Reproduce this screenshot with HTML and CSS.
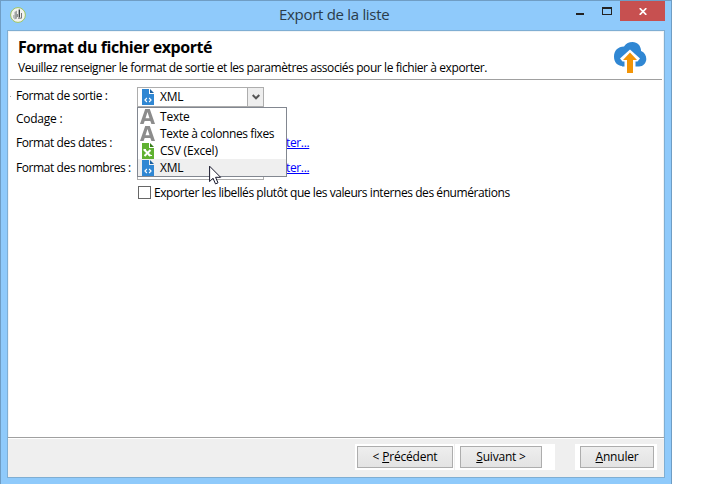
FILE: index.html
```html
<!DOCTYPE html>
<html lang="fr">
<head>
<meta charset="utf-8">
<title>Export de la liste</title>
<link rel="stylesheet" href="styles.css">
</head>
<body>
<svg class="defs" width="0" height="0">
  <symbol id="xml" viewBox="0 0 12 16">
    <path fill="#3087d3" d="M0 0H7V5H12V16H0Z"/>
    <path fill="#1c609f" d="M8 0L12 4H8Z"/>
    <path fill="none" stroke="#fff" stroke-width="1.1" d="M4.9 9L2.9 11L4.9 13M7.1 9L9.1 11L7.1 13"/>
  </symbol>
  <symbol id="csv" viewBox="0 0 12 16">
    <path fill="#5fb130" d="M0 0H7V5H12V16H0Z"/>
    <path fill="#377d18" d="M8 0L12 4H8Z"/>
    <path fill="none" stroke="#fff" stroke-width="2" d="M2 6.5L8.5 13M8.5 7L2.5 13"/>
    <path fill="none" stroke="#fff" d="M1.5 6.5H4M6.5 12.5H10"/>
  </symbol>
  <symbol id="font" viewBox="0 0 15 15">
    <path fill="#8c8c8c" fill-rule="evenodd" d="M5.2 0H9.8L15 15H11.4L10.3 11.9H4.7L3.6 15H0ZM7.5 3L5.5 9.3H9.5Z"/>
  </symbol>
</svg>
<div class="window">
  <header class="titlebar">
    <svg class="app" width="16" height="16" viewBox="0 0 16 16">
      <circle cx="8" cy="8" r="7.4" fill="#f3f3ef" stroke="#9dc45f"/>
      <path fill="#a0a4a4" d="M4.5 5L7 3.5V11.5L4.5 12.5Z"/>
      <path fill="#b9bcbc" d="M3 8H5V12.3L3 11Z"/>
      <path fill="none" stroke="#343a3c" stroke-width="1.3" d="M9.3 2.5V10.5"/>
      <path fill="none" stroke="#777" d="M7.3 7V10M8 11.2H11.5V6"/>
    </svg>
    <h1 class="title">Export de la liste</h1>
    <div class="controls">
      <span class="min"></span><span class="max"></span>
      <span class="close"><svg width="8" height="7" viewBox="0 0 8 7"><path d="M.7 .2L7.3 6.8M7.3 .2L.7 6.8" stroke="#fff" stroke-width="1.7"/></svg></span>
    </div>
  </header>
  <main class="client">
    <section class="head">
      <div class="heading">
        <h2>Format du fichier exporté</h2>
        <p>Veuillez renseigner le format de sortie et les paramètres associés pour le fichier à exporter.</p>
      </div>
      <svg class="cloud" width="33" height="32" viewBox="0 0 33 32">
        <path fill="#3087d3" d="M8 24C3 23.5 0 20 0 14.5C0 8.5 4 4.5 10 4.4C12 1.5 15 0 18.5 0C23.5 0 27 3.8 27.1 9C30.5 10.3 32.3 13.5 32.3 17C32.3 21 29 24.5 25 24.5H8Z"/>
        <path fill="#fff" d="M16 7.6L26 16.5L23.5 19.5H21.5V25H10.5V19.5H8.5L6 16.5Z"/>
        <path fill="#f39507" d="M16 10.5L23 18H19V31H13V18H9Z"/>
      </svg>
    </section>
    <section class="form">
      <div class="row r1"><label>Format de sortie :</label>
        <div class="combo"><svg class="doc"><use href="#xml"/></svg><span class="value">XML</span>
          <span class="drop"><svg width="8" height="6" viewBox="0 0 8 6"><path d="M.7 1L4 4.3L7.3 1" fill="none" stroke="#555" stroke-width="2"/></svg></span>
          <ul class="menu">
            <li><svg class="letter"><use href="#font"/></svg>Texte</li>
            <li><svg class="letter"><use href="#font"/></svg><span class="fixed">Texte à colonnes fixes</span></li>
            <li><svg class="doc"><use href="#csv"/></svg><span class="csv">CSV (Excel)</span></li>
            <li class="on"><svg class="doc"><use href="#xml"/></svg>XML</li>
          </ul>
        </div>
      </div>
      <div class="row r2"><label>Codage :</label></div>
      <div class="row r3"><label>Format des dates :</label><div class="combo"></div><a>ter...</a></div>
      <div class="row r4"><label>Format des nombres :</label><div class="combo"></div><a>ter...</a></div>
      <div class="row r5"><span class="check"></span><span class="checktext">Exporter les libellés plutôt que les valeurs internes des énumérations</span></div>
    </section>
    <footer>
      <span class="pad p1"><button>&lt; <u>P</u>récédent</button></span>
      <span class="pad p2"><button><u>S</u>uivant &gt;</button></span>
      <span class="pad p3"><button><u>A</u>nnuler</button></span>
    </footer>
  </main>
  <svg class="cursor" width="13" height="20" viewBox="0 0 13 20"><path d="M.6 1.2V16.6L4 13.2L6.5 18.9L9 17.8L6.6 12.3H11.6Z" fill="#fff" stroke="#17172b"/></svg>
</div>
</body>
</html>
```
FILE: styles.css
```css
* { box-sizing: border-box; }
body { margin: 0; background: #fff; color: #000; font: 12px/16px "Open Sans", "Noto Sans", sans-serif; letter-spacing: -.2px; }
h1, h2, p, ul { margin: 0; padding: 0; }
svg { display: block; flex: none; }
.defs { position: absolute; }
.window { position: relative; width: 672px; height: 484px; background: #8fcafb; border: 1px solid #6f9dc4; border-bottom: 0; padding: 0 6px 6px; display: flex; flex-direction: column; }
.titlebar { height: 29px; flex: none; display: flex; position: relative; }
.app { margin: 6px 0 0 3px; }
.title { font-size: 15px; line-height: 20px; font-weight: 400; color: #2a3c4a; margin: 3px 0 0 253px; white-space: nowrap; letter-spacing: -.3px; }
.controls { margin-left: auto; display: flex; align-items: flex-start; }
.min { width: 8px; height: 2px; background: #222; margin: 12px 18px 0 0; }
.max { width: 10px; height: 8px; border: 1px solid #222; border-top-width: 2px; margin: 6px 8px 0 0; }
.close { width: 45px; height: 20px; background: #c75050; display: flex; align-items: center; justify-content: center; }
.client { flex: 1; width: 658px; border: 1px solid #7faed3; background: #fff; display: flex; flex-direction: column; box-shadow: inset 1px 1px #f0f4f7, inset -1px 0 #eef2f5; }
.head { height: 49px; margin: 0 2px; border-bottom: 1px solid #a0a0a0; display: flex; }
.heading { flex: 1; padding: 6px 0 0 8px; white-space: nowrap; }
h2 { font-size: 16px; line-height: 20px; letter-spacing: -.45px; }
.heading p { margin-top: 3px; letter-spacing: -.415px; }
.cloud { margin: 11px 15px 0 0; }
.form { flex: 1; padding: 7px 0 0 8px; }
.row { display: flex; height: 21px; align-items: flex-start; white-space: nowrap; }
.r1 { position: relative; }
.r1::before { content: ""; position: absolute; left: -6px; top: 9px; width: 1px; height: 1px; background: #aaa; }
label { width: 121px; padding-top: 1px; flex: none; letter-spacing: -.41px; }
.combo { position: relative; width: 127px; height: 20px; border: 1px solid #adadad; background: #fff; display: flex; align-items: center; }
.doc { width: 12px; height: 16px; margin: 0 6px 0 4px; }
.drop { width: 16px; height: 18px; border-left: 1px solid #adadad; background: #eee; margin-left: auto; display: flex; align-items: center; justify-content: center; }
.menu { position: absolute; z-index: 2; left: -1px; top: 19px; width: 150px; height: 70px; border: 1px solid #828790; background: #fff; list-style: none; }
.menu li { height: 17px; display: flex; align-items: center; }
.menu .on { background: #efefef; }
.fixed { letter-spacing: -.4px; }
.letter { width: 15px; height: 15px; margin: 0 5px 0 2px; }
.r2 { margin-top: 2px; }
.r2 label { letter-spacing: -.25px; }
.r3 { margin-top: 3px; }
.r4 { margin-top: 4px; }
.r4 .combo { height: 21px; }
.r5 { margin: 6px 0 0 122px; }
.row a { color: #00f; text-decoration: underline; margin: 1px 0 0 22px; letter-spacing: -.35px; }
.check { width: 13px; height: 13px; border: 1px solid #666; margin-right: 3px; }
.checktext { margin-top: -1px; letter-spacing: -.43px; }
footer { height: 40px; flex: none; background: #efefef; border-top: 1px solid #a0a0a0; box-shadow: inset 0 1px #fff; display: flex; padding: 6px 6px 0 347px; }
.pad { background: #fff; height: 26px; padding: 2px; }
.p1 { width: 99px; margin-right: 1px; }
.p2 { width: 100px; padding-left: 5px; }
.p3 { width: 82px; margin-left: 20px; padding-left: 5px; }
button { display: block; width: 96px; height: 22px; border: 1px solid #adadad; background: linear-gradient(#eee, #e3e3e3); padding: 0; font: inherit; letter-spacing: inherit; color: #000; }
.p2 button { width: 82px; }
.p3 button { width: 74px; }
.cursor { position: absolute; left: 208px; top: 164px; z-index: 3; }
```
